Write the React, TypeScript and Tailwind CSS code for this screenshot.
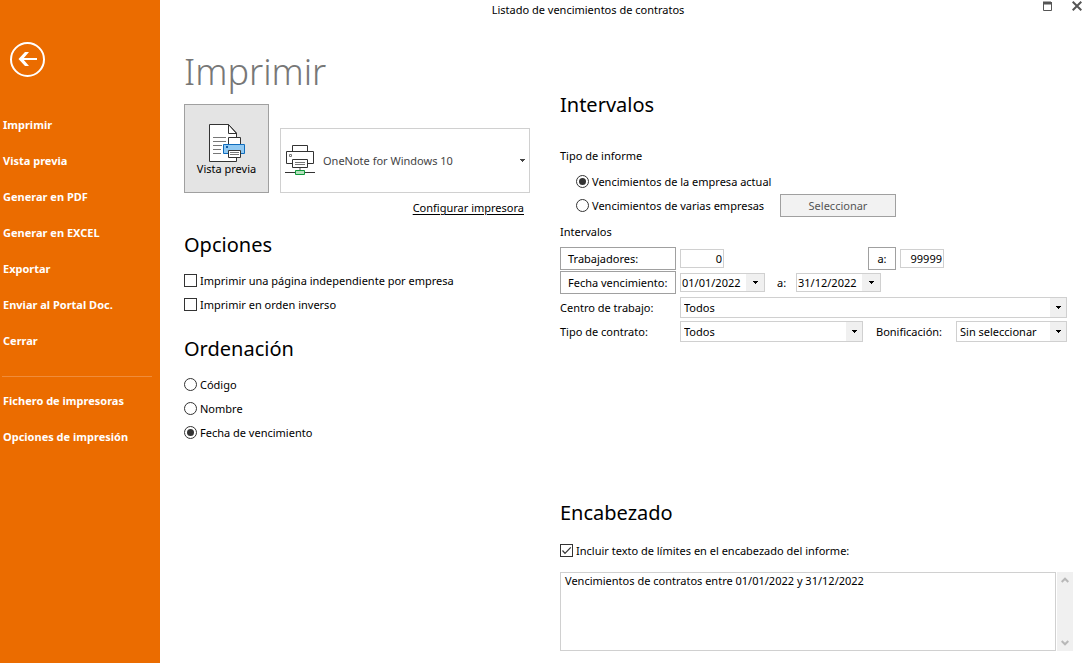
import { useState } from "react";
import type { ReactNode } from "react";

const ACTIONS = [
  "Imprimir", "Vista previa", "Generar en PDF", "Generar en EXCEL",
  "Exportar", "Enviar al Portal Doc.", "Cerrar",
];

const SETTINGS = ["Fichero de impresoras", "Opciones de impresión"];

const SORTS = ["Código", "Nombre", "Fecha de vencimiento"];

function NavItem({ children }: { children: ReactNode }) {
  return (
    <button className="flex h-9 w-full items-center pl-[3px] text-left font-bold whitespace-nowrap text-white">
      {children}
    </button>
  );
}

function Check({ label, defaultChecked }: { label: string; defaultChecked?: boolean }) {
  return (
    <label className="flex h-6 items-center gap-[3px] pb-px whitespace-nowrap">
      <span className="grid size-[13px] shrink-0">
        <input
          type="checkbox"
          defaultChecked={defaultChecked}
          className="peer col-start-1 row-start-1 size-[13px] appearance-none border border-[#333] bg-white"
        />
        <svg viewBox="0 0 13 13" className="pointer-events-none invisible col-start-1 row-start-1 size-[13px] peer-checked:visible" fill="none" stroke="#333" strokeWidth="1.2">
          <path d="M2.5 6.5 5 9.3 10.8 3.4" />
        </svg>
      </span>
      {label}
    </label>
  );
}

function Radio({ name, label, checked, onChange }: { name: string; label: string; checked: boolean; onChange: () => void }) {
  return (
    <label className="flex h-6 items-center gap-[3px] pb-px whitespace-nowrap">
      <input
        type="radio"
        name={name}
        checked={checked}
        onChange={onChange}
        className="grid size-[13px] shrink-0 appearance-none place-items-center rounded-full border border-[#333] bg-white checked:before:size-[7px] checked:before:rounded-full checked:before:bg-[#333]"
      />
      {label}
    </label>
  );
}

function Caret() {
  return (
    <svg viewBox="0 0 5 3" width="5" height="3" fill="currentColor" shapeRendering="crispEdges">
      <path d="M0 0h5v1H4v1H3v1H2V2H1V1H0z" />
    </svg>
  );
}

function Select({ id, options, className }: { id: string; options: string[]; className: string }) {
  return (
    <div className={`relative h-[21px] ${className}`}>
      <select id={id} className="block h-full w-full appearance-none border border-[#d0d0d0] bg-white pr-4 pl-[3px] text-[11px] leading-4">
        {options.map(o => <option key={o}>{o}</option>)}
      </select>
      <span className="pointer-events-none absolute inset-y-px right-px flex w-4 items-center justify-center bg-[#f0f0f0]">
        <Caret />
      </span>
    </div>
  );
}

function DateField({ label, value }: { label: string; value: string }) {
  return (
    <div className="flex h-[19px] w-[85px] border border-[#d0d0d0]">
      <input aria-label={label} defaultValue={value} className="w-[65px] min-w-0 pl-px text-[11px] leading-4 outline-none" />
      <button aria-label="Abrir calendario" className="flex flex-1 items-center justify-center bg-[#f0f0f0]">
        <Caret />
      </button>
    </div>
  );
}

function PreviewIcon() {
  return (
    <svg viewBox="0 0 37 38" width="37" height="38" fill="none">
      <g transform="translate(1 0)">
        <path d="M.5.5h19l8 8.500v28.500H.5z" fill="#fff" stroke="#333" />
        <path d="M19.500.5v9h8M19.500.5l8 9" stroke="#333" />
        <path d="M4 13.500h13M4 17.500h13M4 21.500h9M4 25.500h8M4 29.500h8" stroke="#777" />
        <path d="M19.500 13.500h12v7h-12z" fill="#fff" stroke="#333" />
        <path d="M14.500 20.500h21v9h-21z" fill="#91c9f2" stroke="#0f6cbd" />
        <path d="M17 22h2v2h-2z" fill="#0f5ca8" />
        <path d="M19.500 26.500h12v7h-12z" fill="#fff" stroke="#333" />
        <path d="M21 28.500h9M21 30.500h9" stroke="#777" />
      </g>
    </svg>
  );
}

function PrinterIcon() {
  return (
    <svg viewBox="0 0 30 31" width="30" height="31" fill="none">
      <path d="M7.500.5h15v6h-15z" fill="#fff" stroke="#333" />
      <path d="M1.500 6.500h27v12h-27z" fill="#fff" stroke="#333" />
      <path d="M4.500 9.500h2v2h-2z" stroke="#777" />
      <path d="M7.500 14.500h15v8h-15z" fill="#fff" stroke="#333" />
      <path d="M10 17.500h10M10 19.500h10" stroke="#777" />
      <path d="M15 23v2" stroke="#aaa" strokeWidth="2" />
      <path d="M0 27.500h30" stroke="#333" />
      <path d="M10.500 25.500h9v4h-9z" fill="#b5e0bd" stroke="#10983a" />
    </svg>
  );
}

function ScrollArrow({ up }: { up?: boolean }) {
  return (
    <svg viewBox="0 0 8 6" width="8" height="6" fill="none" stroke="#b8b8b8" strokeWidth="2">
      <path d={up ? "M.7 5 4 1.700 7.300 5" : "M.7 1 4 4.300 7.300 1"} />
    </svg>
  );
}

export default function App() {
  const [sort, setSort] = useState("Fecha de vencimiento");
  const [scope, setScope] = useState("actual");

  return (
    <div className="flex min-h-screen bg-white font-['Noto_Sans',sans-serif] text-[11px] leading-4 text-black">
      {/* Backstage menu */}
      <nav className="w-40 shrink-0 bg-[#eb6c00] pt-[42px]">
        <button aria-label="Volver" className="mb-[30px] ml-2.5 block size-[35px]">
          <svg viewBox="0 0 35 35" className="size-[35px]" fill="none" stroke="#fff">
            <circle cx="17.500" cy="17.500" r="16.500" strokeWidth="2" />
            <path d="M27 17H11" strokeWidth="2" />
            <path d="M19 10h-4l-6.500 7 6.500 7h4l-6-7z" fill="#fff" stroke="none" />
          </svg>
        </button>
        {ACTIONS.map(a => <NavItem key={a}>{a}</NavItem>)}
        <hr className="mt-[17px] mr-2 mb-1.5 ml-0.5 border-[#f08c3a]" />
        {SETTINGS.map(s => <NavItem key={s}>{s}</NavItem>)}
      </nav>

      <div className="min-w-0 flex-1">
        {/* Title bar */}
        <header className="flex h-5 items-center">
          <span className="flex-1 text-center">Listado de vencimientos de contratos</span>
          <div className="flex w-[71px] justify-end gap-5 pr-[5px] pb-2">
            <button aria-label="Maximizar">
              <svg viewBox="0 0 10 10" width="10" height="10" fill="none" stroke="#555">
                <path d="M1 2h8" strokeWidth="3" />
                <path d="M1.500 1v8.500h8V1" />
              </svg>
            </button>
            <button aria-label="Cerrar ventana">
              <svg viewBox="0 0 10 10" width="10" height="10" stroke="#555" strokeWidth="2">
                <path d="m.7.7 8.600 8.600M9.300.7.7 9.300" />
              </svg>
            </button>
          </div>
        </header>

        <div className="flex gap-[30px] pr-3.5 pl-6">
          <section className="w-[346px] shrink-0 pt-7">
            <h1 className="text-[36px] leading-[48px] font-light text-[#777]">Imprimir</h1>
            <div className="mt-2 flex items-end justify-between">
              <button className="flex h-[89px] w-[85px] flex-col items-center border border-[#a0a0a0] bg-[#e4e4e4] pt-[19px] leading-[14px] whitespace-nowrap">
                <PreviewIcon />
                Vista previa
              </button>
              <button className="flex h-[65px] w-[250px] items-center border border-[#d0d0d0] px-1 text-left text-[#444]">
                <PrinterIcon />
                <span className="flex-1 pl-2">OneNote for Windows 10</span>
                <Caret />
              </button>
            </div>
            <div className="mt-[7px] pr-1.5 text-right">
              <a href="#" className="underline underline-offset-2">Configurar impresora</a>
            </div>

            <h2 className="mt-[13px] text-[20px] leading-8">Opciones</h2>
            <div className="mt-2">
              <Check label="Imprimir una página independiente por empresa" />
              <Check label="Imprimir en orden inverso" />
            </div>

            <h2 className="mt-4 text-[20px] leading-8">Ordenación</h2>
            <div className="mt-2">
              {SORTS.map(s => (
                <Radio key={s} name="sort" label={s} checked={sort === s} onChange={() => setSort(s)} />
              ))}
            </div>
          </section>

          <section className="min-w-0 flex-1 pt-[69px]">
            <h2 className="text-[20px] leading-8">Intervalos</h2>
            <p className="mt-[23px] leading-6">Tipo de informe</p>
            <div className="mt-0.5 pl-4">
              <Radio name="scope" label="Vencimientos de la empresa actual" checked={scope === "actual"} onChange={() => setScope("actual")} />
              <div className="flex h-6">
                <div className="w-[204px]">
                  <Radio name="scope" label="Vencimientos de varias empresas" checked={scope === "varias"} onChange={() => setScope("varias")} />
                </div>
                <button className="h-[23px] w-[116px] border border-[#a0a0a0] bg-[#f2f2f2] text-[#555]">Seleccionar</button>
              </div>
            </div>
            <p className="mt-0.5 leading-6">Intervalos</p>

            {/* Limits */}
            <div className="pt-[3px] pr-1.5">
              <div className="flex h-6 items-start">
                <button className="mr-1 h-[23px] w-[116px] border border-[#a0a0a0] pl-[7px] text-left">Trabajadores:</button>
                <input aria-label="Trabajador desde" defaultValue="0" className="mt-0.5 h-[19px] w-11 border border-[#d0d0d0] pr-px text-right" />
                <button className="mr-1 ml-36 h-[23px] w-7 border border-[#a0a0a0]">a:</button>
                <input aria-label="Trabajador hasta" defaultValue="99999" className="mt-0.5 h-[19px] w-11 border border-[#d0d0d0] pr-px text-right" />
              </div>
              <div className="flex h-6 items-center pb-px">
                <button className="mr-1 h-[23px] w-[116px] border border-[#a0a0a0] pl-[7px] text-left whitespace-nowrap">Fecha vencimiento:</button>
                <DateField label="Fecha desde" value="01/01/2022" />
                <span className="w-[31px] pl-3">a:</span>
                <DateField label="Fecha hasta" value="31/12/2022" />
              </div>
              <div className="flex h-6 items-center pt-px">
                <label htmlFor="centro" className="w-[120px] shrink-0">Centro de trabajo:</label>
                <Select id="centro" options={["Todos"]} className="flex-1" />
              </div>
              <div className="flex h-6 items-center pt-px">
                <label htmlFor="contrato" className="w-[120px] shrink-0">Tipo de contrato:</label>
                <Select id="contrato" options={["Todos"]} className="w-[183px]" />
                <label htmlFor="bonificacion" className="ml-[13px] w-20 shrink-0">Bonificación:</label>
                <Select id="bonificacion" options={["Sin seleccionar"]} className="min-w-0 flex-1" />
              </div>
            </div>

            <h2 className="mt-[154px] text-[20px] leading-8">Encabezado</h2>
            <div className="mt-2.5">
              <Check label="Incluir texto de límites en el encabezado del informe:" defaultChecked />
            </div>
            <div className="mt-[9px] flex h-[79px] gap-px">
              <textarea
                aria-label="Texto del encabezado"
                defaultValue="Vencimientos de contratos entre 01/01/2022 y 31/12/2022"
                className="min-w-0 flex-1 resize-none overflow-hidden border border-[#d0d0d0] px-1 leading-4"
              />
              <div className="flex w-4 flex-col items-center justify-between bg-[#f0f0f0] py-[5px]">
                <button aria-label="Subir"><ScrollArrow up /></button>
                <button aria-label="Bajar"><ScrollArrow /></button>
              </div>
            </div>
          </section>
        </div>
      </div>
    </div>
  );
}
